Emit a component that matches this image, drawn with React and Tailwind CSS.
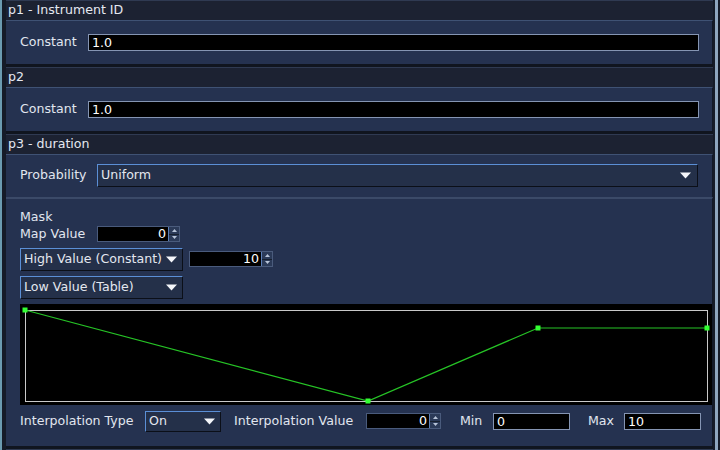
import React from 'react'

const font = { fontFamily: '"DejaVu Sans", "Liberation Sans", sans-serif' }

function Arrow() {
  return (
    <svg width="11" height="7" viewBox="0 0 11 7" className="shrink-0">
      <polygon points="0,0.5 11,0.5 5.5,6.5" fill="#f4f6fa" />
    </svg>
  )
}

function Select({ value, className }) {
  return (
    <div className={`flex items-center bg-[#243049] border border-t-[#5b8fd6] border-l-[#5b8fd6] border-b-[#0b0f18] border-r-[#0b0f18] pr-[5px] ${className}`}>
      <span className="flex-1 text-[12.6px] text-[#e3e7ef] truncate">{value}</span>
      <Arrow />
    </div>
  )
}

function Spinner({ value, className }) {
  return (
    <div className={`flex h-[16px] border border-[#4a5b7c] ${className}`}>
      <div className="flex-1 bg-black text-right pr-[2px] text-[12.6px] leading-[14px] text-white">{value}</div>
      <div className="w-[11px] flex flex-col bg-[#2b3a58] border-l border-[#5b7fb8]">
        <div className="flex-1 flex items-center justify-center border-b border-[#17202f]">
          <svg width="5" height="3" viewBox="0 0 5 3"><polygon points="0,3 5,3 2.5,0" fill="#b8c4d8" /></svg>
        </div>
        <div className="flex-1 flex items-center justify-center">
          <svg width="5" height="3" viewBox="0 0 5 3"><polygon points="0,0 5,0 2.5,3" fill="#b8c4d8" /></svg>
        </div>
      </div>
    </div>
  )
}

function TextBox({ value, className }) {
  return (
    <div className={`h-[17px] bg-black border border-[#8595b3] pl-[3px] text-[12.6px] leading-[15px] text-white ${className}`}>
      {value}
    </div>
  )
}

function Header({ title }) {
  return (
    <div className="h-[20px] bg-[#1c2232] border-t border-[#2f3a52] pl-[2px] text-[12.6px] leading-[18px] text-[#e4e8f0]">
      {title}
    </div>
  )
}

function ConstantPanel() {
  return (
    <div className="h-[44px] bg-[#253250] border-t border-[#3f5274] border-r border-r-[#111827] flex items-center pl-[14px] pr-[13px]">
      <span className="w-[68px] text-[12.6px] text-[#e1e6ef]">Constant</span>
      <TextBox value="1.0" className="flex-1" />
    </div>
  )
}

function Graph() {
  const pts = [[5, 6], [348, 97], [518, 24], [687, 24]]
  return (
    <div className="w-[692px] h-[101px] bg-black">
      <svg width="692" height="101" viewBox="0 0 692 101">
        <rect x="5.5" y="6.5" width="682" height="91" fill="none" stroke="#c9c9c9" strokeWidth="1" />
        <polyline points={pts.map(p => p.join(',')).join(' ')} fill="none" stroke="#26c426" strokeWidth="1.2" />
        {pts.map((p, i) => (
          <rect key={i} x={p[0] - 2.5} y={p[1] - 2.5} width="5" height="5" fill="#33ff33" />
        ))}
      </svg>
    </div>
  )
}

export default function App() {
  return (
    <div style={font} className="w-[720px] h-[450px] bg-[#121826] overflow-hidden flex">
      <div className="w-[2px] bg-[#6b9bb0]" />
      <div className="w-[4px] bg-[#151b28]" />

      <div className="w-[707px] flex flex-col">
        {/* p1 */}
        <Header title="p1 - Instrument ID" />
        <ConstantPanel />
        <div className="h-[3px] bg-[#10151f]" />

        {/* p2 */}
        <Header title="p2" />
        <ConstantPanel />
        <div className="h-[3px] bg-[#10151f]" />

        {/* p3 */}
        <Header title="p3 - duration" />
        <div className="h-[43px] bg-[#253250] border-t border-[#3f5274] border-r border-r-[#111827] flex items-center pl-[14px] pr-[14px]">
          <span className="w-[77px] text-[12.6px] text-[#e1e6ef]">Probability</span>
          <Select value="Uniform" className="flex-1 h-[23px] pl-[3px] pr-[6px]" />
        </div>

        <div className="h-[250px] bg-[#253250] border-t-2 border-t-[#3b4a68] border-r border-r-[#111827] pl-[14px] pt-[11px] flex flex-col text-[12.6px] text-[#e1e6ef]">
          <div className="h-[14px] leading-[14px]">Mask</div>
          <div className="mt-[2px] h-[17px] flex items-center">
            <span className="w-[77px]">Map Value</span>
            <Spinner value="0" className="w-[83px]" />
          </div>
          <div className="mt-[5px] h-[23px] flex items-center">
            <Select value="High Value (Constant)" className="w-[163px] h-[23px] pl-[3px]" />
            <Spinner value="10" className="w-[84px] ml-[6px]" />
          </div>
          <div className="mt-[5px] h-[23px] flex items-center">
            <Select value="Low Value (Table)" className="w-[163px] h-[23px] pl-[3px] pr-[5px]" />
          </div>
          <div className="mt-[5px]">
            <Graph />
          </div>
          <div className="mt-[6px] h-[21px] flex items-center">
            <span className="w-[125px]">Interpolation Type</span>
            <Select value="On" className="w-[76px] h-[21px] pl-[3px]" />
            <span className="w-[132px] ml-[13px]">Interpolation Value</span>
            <Spinner value="0" className="w-[75px]" />
            <span className="w-[33px] ml-[19px]">Min</span>
            <TextBox value="0" className="w-[77px] h-[16px] leading-[14px]" />
            <span className="w-[36px] ml-[18px]">Max</span>
            <TextBox value="10" className="w-[77px] h-[16px] leading-[14px]" />
          </div>
        </div>
        <div className="h-[3px] bg-[#10151f]" />
        <div className="flex-1 bg-[#1c2232] border-t border-[#2f3a52]" />
      </div>

      <div className="w-[2px] bg-[#151b28]" />
      <div className="w-[3px] bg-[#8ea6bf]" />
      <div className="flex-1 bg-[#151b28]" />
    </div>
  )
}
